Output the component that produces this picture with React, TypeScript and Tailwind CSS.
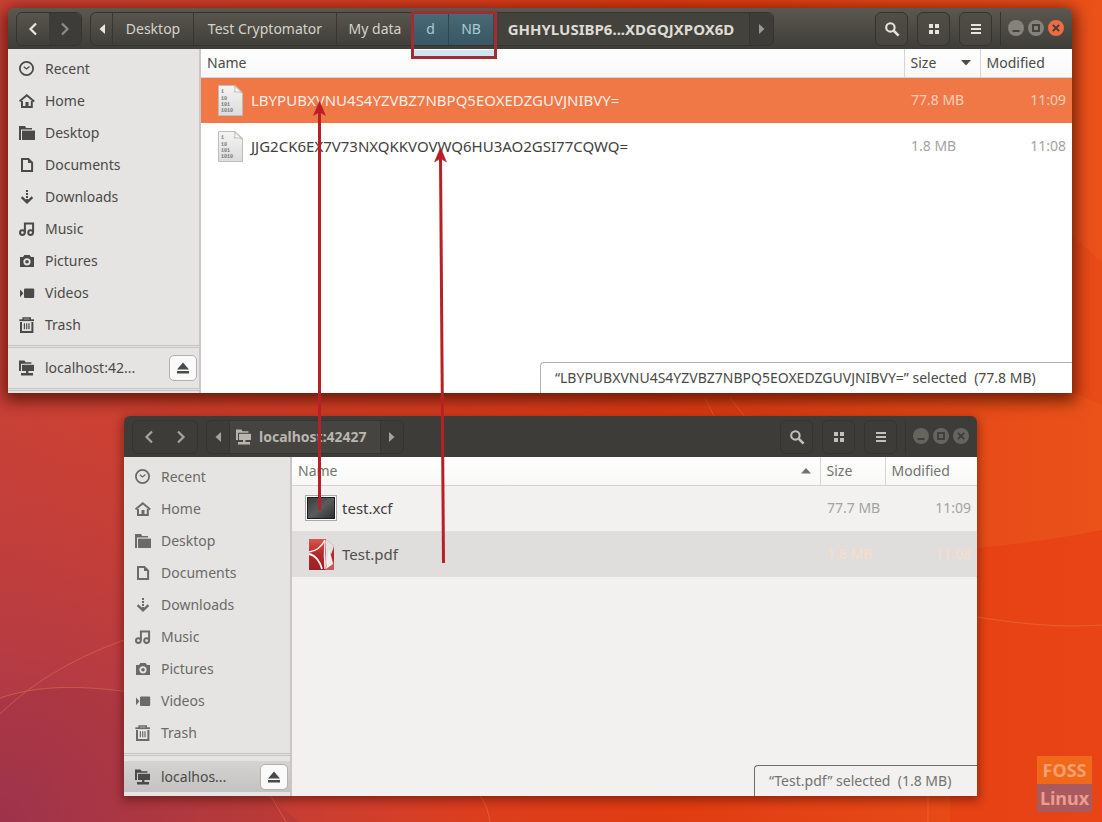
import type { ReactNode } from 'react'
import clsx from 'clsx'

type TIconName = 'recent' | 'home' | 'desktop' | 'documents' | 'downloads' | 'music' | 'pictures' | 'videos' | 'trash' | 'network'

type TPlace = {
    icon: TIconName,
    label: string
}

type TFile = {
    name: string,
    size: string,
    modified: string,
    icon: ReactNode,
    selected?: boolean
}

type TWindowProps = {
    className?: string,
    active: boolean,
    path: ReactNode,
    mount: string,
    files: TFile[],
    sortBy: 'name' | 'size',
    status: ReactNode
}

const places: TPlace[] = [
    { icon: 'recent', label: 'Recent' },
    { icon: 'home', label: 'Home' },
    { icon: 'desktop', label: 'Desktop' },
    { icon: 'documents', label: 'Documents' },
    { icon: 'downloads', label: 'Downloads' },
    { icon: 'music', label: 'Music' },
    { icon: 'pictures', label: 'Pictures' },
    { icon: 'videos', label: 'Videos' },
    { icon: 'trash', label: 'Trash' },
]

const shapes: Record<TIconName, ReactNode> = {
    recent: (
        <g fill="none" stroke="currentColor">
            <circle cx="7.5" cy="7.5" r="6.6" strokeWidth="1.8" />
            <path d="M4.8 5.8 L7.5 8 L10.5 5.4" strokeWidth="1.3" />
        </g>
    ),
    home: (
        <g>
            <path d="M0.5 8.4 L7.8 2.2 L15.2 8.4" fill="none" stroke="currentColor" strokeWidth="1.9" />
            <path d="M3 8 V14 H12.8 V8" fill="none" stroke="currentColor" strokeWidth="2" />
            <rect x="6.5" y="9" width="3" height="5" fill="currentColor" />
        </g>
    ),
    desktop: (
        <g fill="currentColor">
            <path d="M0 1 H6 L7.2 3 H13 V4.6 H2 V15 H0 Z" />
            <path d="M3 5.6 H16 V15 H3 Z" />
        </g>
    ),
    documents: (
        <g>
            <path d="M3 1.9 H9.4 L13.1 5.6 V14.1 H3 Z" fill="none" stroke="currentColor" strokeWidth="2" />
            <path d="M9 1.5 V6 H13.5 Z" fill="currentColor" />
        </g>
    ),
    downloads: (
        <g fill="none" stroke="currentColor">
            <path d="M8 1 V12" strokeWidth="2" strokeDasharray="2 1" />
            <path d="M2.6 8.2 L8 13.4 L13.4 8.2" strokeWidth="2.3" />
        </g>
    ),
    music: (
        <g fill="none" stroke="currentColor" strokeWidth="2">
            <circle cx="3.4" cy="11.6" r="2.4" />
            <circle cx="11.6" cy="11.6" r="2.4" />
            <path d="M5.9 11.6 V2.4 H14.1 V11.6" />
        </g>
    ),
    pictures: (
        <path
            fill="currentColor"
            fillRule="evenodd"
            d="M1 4 H4 L5.4 2 H10.6 L12 4 H15 V14 H1 Z M8 5.2 A3.6 3.6 0 1 0 8 12.4 A3.6 3.6 0 1 0 8 5.2 Z M8 7 A1.8 1.8 0 1 1 8 10.6 A1.8 1.8 0 1 1 8 7 Z"
        />
    ),
    videos: (
        <g fill="currentColor">
            <rect x="5" y="3.6" width="10.2" height="9.4" rx="1" />
            <path d="M1 4.4 L4.4 8.3 L1 12.2 Z" />
        </g>
    ),
    trash: (
        <g fill="none" stroke="currentColor">
            <path d="M0.4 3.2 H15" strokeWidth="1.8" />
            <path d="M4.2 3 V1 H11.2 V3" strokeWidth="1.6" />
            <path d="M2 5 V14.9 H13.4 V5" strokeWidth="2" />
            <path d="M5.4 6.2 V12.2 M7.7 6.2 V12.2 M10 6.2 V12.2" strokeWidth="1.2" />
        </g>
    ),
    network: (
        <g fill="currentColor">
            <path d="M0 0.6 H5.4 L6.6 2.2 H12.4 V3.8 H2 V11 H0 Z" />
            <path d="M3 4.8 H15 V11 H3 Z" />
            <path d="M7 11 H9.4 V13 H14 V15.4 H2 V13 H7 Z" />
        </g>
    ),
}

const Icon = ({ name, className }: { name: TIconName, className?: string }) => (
    <svg viewBox="0 0 16 16" className={clsx('size-4 shrink-0', className)} aria-hidden="true">
        {shapes[name]}
    </svg>
)

const BinaryFile = () => (
    <svg viewBox="0 0 25 31" className="w-[25px] h-[31px]" aria-hidden="true">
        <defs>
            <linearGradient id="sheet" x1="0" y1="0" x2="0" y2="1">
                <stop offset="0" stopColor="#f4f4f3" />
                <stop offset="1" stopColor="#dcdcda" />
            </linearGradient>
        </defs>
        <path d="M0.5 0.5 H17 L24.5 7.5 V30.5 H0.5 Z" fill="url(#sheet)" stroke="#bdbdb9" />
        <path d="M16.5 1 C17.5 4 17 6 16 7 C19 6.5 22 7 24 8 Z" fill="#fbfbfb" stroke="#b0b0ac" strokeWidth="0.8" />
        <g fill="#77777a" fontSize="5" fontWeight="700" fontFamily="Liberation Mono, monospace">
            <text x="3" y="8">1</text>
            <text x="3" y="15">10</text>
            <text x="3" y="21">101</text>
            <text x="3" y="27">1010</text>
        </g>
    </svg>
)

const ImageThumb = () => (
    <svg viewBox="0 0 32 26" className="w-8 h-[26px]" aria-hidden="true">
        <defs>
            <linearGradient id="thumb" x1="0" y1="0" x2="1" y2="1">
                <stop offset="0" stopColor="#3b3c3e" />
                <stop offset="0.5" stopColor="#595b5d" />
                <stop offset="1" stopColor="#2d2e30" />
            </linearGradient>
        </defs>
        <rect x="0.5" y="0.5" width="31" height="25" fill="#fff" stroke="#a9a9a9" />
        <rect x="2.5" y="2.5" width="27" height="21" fill="url(#thumb)" stroke="#1c1c1c" />
    </svg>
)

const PdfFile = () => (
    <svg viewBox="0 0 25 31" className="w-[25px] h-[31px]" aria-hidden="true">
        <defs>
            <linearGradient id="pdf" x1="0" y1="0" x2="0" y2="1">
                <stop offset="0" stopColor="#d9574f" />
                <stop offset="0.5" stopColor="#b32626" />
                <stop offset="1" stopColor="#9c2029" />
            </linearGradient>
        </defs>
        <path d="M0 0 H17 L25 7 V31 H0 Z" fill="url(#pdf)" />
        <path d="M17 0 L25 7 L21 19 L16 30 Z" fill="#e3e0df" />
        <path d="M21 13 L25 24 V31 H16 Z" fill="#c7575a" />
        <path d="M20 9 L17 30 L24 25 Z" fill="#f0eded" />
        <path d="M0 13 C7 12 13 7 16 1" fill="none" stroke="#f6eeee" strokeWidth="1.6" />
        <path d="M16 2 C15 12 15 20 16 30" fill="none" stroke="#f6eeee" strokeWidth="1.2" />
        <path d="M0 15 C6 16 11 22 13 30" fill="none" stroke="#f6eeee" strokeWidth="1.8" />
    </svg>
)

const Chevron = ({ left }: { left?: boolean }) => (
    <svg viewBox="0 0 10 14" className="w-[10px] h-[14px]" aria-hidden="true">
        <path d={left ? 'M8 1.5 L2.5 7 L8 12.5' : 'M2 1.5 L7.5 7 L2 12.5'} fill="none" stroke="currentColor" strokeWidth="2.2" />
    </svg>
)

const Triangle = ({ left }: { left?: boolean }) => (
    <svg viewBox="0 0 6 10" className="w-[6px] h-[10px]" aria-hidden="true">
        <path d={left ? 'M6 0 V10 L0.5 5 Z' : 'M0 0 V10 L5.5 5 Z'} fill="currentColor" />
    </svg>
)

const ToolButton = ({ label, active, children }: { label: string, active: boolean, children: ReactNode }) => (
    <button
        aria-label={label}
        className={clsx('flex h-[34px] w-[33px] items-center justify-center rounded-md border', active ? 'border-[#34332e] bg-[#4c4a44]/60 text-[#e6e4df]' : 'border-[#353430] text-[#c2c0ba]')}
    >
        <svg viewBox="0 0 16 16" className="size-4" aria-hidden="true">{children}</svg>
    </button>
)

const WindowControl = ({ label, tone, children }: { label: string, tone: string, children: ReactNode }) => (
    <button aria-label={label} className={clsx('flex size-4 items-center justify-center rounded-full', tone)}>
        <svg viewBox="0 0 16 16" className="size-4" fill="none" stroke="#3d3c37" strokeWidth="1.8" aria-hidden="true">{children}</svg>
    </button>
)

const HeaderBar = ({ active, path }: { active: boolean, path: ReactNode }) => {
    const line = active ? 'border-[#34332e]' : 'border-[#353430]'
    const plain = active ? 'bg-[#84827b]' : 'bg-[#66645e]'

    return (
        <header className={clsx('relative z-10 flex h-[41px] items-center rounded-t-md pl-2', active ? 'bg-linear-to-b from-[#5b5850] to-[#3e3d38]' : 'bg-[#3d3c38]')}>
            <div className={clsx('flex h-[34px] w-[66px] rounded-md border', line)}>
                <button aria-label="Back" className={clsx('flex flex-1 items-center justify-center', active ? 'text-[#e9e7e2]' : 'text-[#a5a39d]')}>
                    <Chevron left />
                </button>
                <button aria-label="Forward" className={clsx('flex flex-1 items-center justify-center rounded-r-md', active ? 'bg-[#3d3c38] text-[#8d8b85]' : 'text-[#a5a39d]')}>
                    <Chevron />
                </button>
            </div>
            <nav aria-label="Path" className={clsx('ml-2 flex h-[34px] items-stretch rounded-md border', line)}>
                {path}
            </nav>
            <div className="ml-auto flex items-center gap-[9px]">
                <ToolButton label="Search" active={active}>
                    <circle cx="6.4" cy="6.4" r="4.2" fill="none" stroke="currentColor" strokeWidth="2.1" />
                    <path d="M9.6 9.6 L14.6 14.6" stroke="currentColor" strokeWidth="2.6" />
                </ToolButton>
                <ToolButton label="Grid view" active={active}>
                    <path d="M3 3 H7 V7 H3 Z M9 3 H13 V7 H9 Z M3 9 H7 V13 H3 Z M9 9 H13 V13 H9 Z" fill="currentColor" />
                </ToolButton>
                <ToolButton label="Menu" active={active}>
                    <path d="M3 4 H13 M3 8 H13 M3 12 H13" stroke="currentColor" strokeWidth="2.2" />
                </ToolButton>
            </div>
            <div className={clsx('ml-2 flex h-[34px] items-center gap-1 border-l pb-[2px] pl-[7px] pr-2', line)}>
                <WindowControl label="Minimize" tone={plain}>
                    <path d="M4.5 11 H11.5" />
                </WindowControl>
                <WindowControl label="Maximize" tone={plain}>
                    <rect x="5" y="5" width="6" height="6" />
                </WindowControl>
                <WindowControl label="Close" tone={active ? 'bg-[#ee6c42]' : plain}>
                    <path d="M4.8 4.8 L11.2 11.2 M11.2 4.8 L4.8 11.2" />
                </WindowControl>
            </div>
        </header>
    )
}

const Sidebar = ({ active, mount }: { active: boolean, mount: string }) => (
    <aside
        className={clsx('flex shrink-0 flex-col border-r-2 border-[#c9c6c4] bg-[#e6e4e3] pt-1', active ? 'w-[193px] text-[#4a4a48]' : 'w-[168px] text-[#6a6a66]')}
    >
        <ul>
            {places.map((p) => (
                <li key={p.label}>
                    <a href="#" className="flex h-8 items-center gap-[10px] pl-[11px]">
                        <Icon name={p.icon} />
                        <span>{p.label}</span>
                    </a>
                </li>
            ))}
        </ul>
        <hr className="mt-1 h-[3px] border-y border-[#c6c4c2]" />
        <div
            className={clsx('flex items-center gap-[10px] pl-[11px] pr-[2px]', active ? 'mt-1 h-8' : 'mt-[5px] h-[31px] bg-linear-to-b from-[#d5d3d1] to-[#c5c3c0] text-[#4a4a48]')}
        >
            <Icon name="network" />
            <a href="#" className="flex-1 truncate">{mount}</a>
            <button aria-label="Eject" className="flex h-[26px] w-7 items-center justify-center rounded-[5px] border border-[#b3b0ad] bg-[#fafafa]">
                <svg viewBox="0 0 14 12" className="w-[14px] h-3" fill="currentColor" aria-hidden="true">
                    <path d="M7 0.5 L13 7.5 H1 Z M1 9 H13 V11.4 H1 Z" />
                </svg>
            </button>
        </div>
        {active && <hr className="mt-1 h-[3px] border-y border-[#c6c4c2]" />}
        <div className={active ? 'h-[2px]' : 'h-1'} />
    </aside>
)

const SortMark = ({ up }: { up?: boolean }) => (
    <svg viewBox="0 0 10 6" className="w-[10px] h-[6px]" fill="currentColor" aria-hidden="true">
        <path d={up ? 'M5 0 L10 5.5 H0 Z' : 'M0 0 H10 L5 5.5 Z'} />
    </svg>
)

const FileWindow = ({ className, active, path, mount, files, sortBy, status }: TWindowProps) => (
    <section className={clsx('rounded-t-md', className, active ? 'shadow-[0_4px_16px_4px_rgba(60,10,0,0.7)]' : 'shadow-[0_3px_10px_2px_rgba(60,10,0,0.45)]')}>
        <HeaderBar active={active} path={path} />
        <div className="flex">
            <Sidebar active={active} mount={mount} />
            <main className={clsx('relative min-w-0 flex-1', active ? 'bg-white' : 'bg-[#f2f1f0]')}>
                <table className="w-full table-fixed border-collapse text-left">
                    <thead className={clsx('bg-linear-to-b from-white to-[#f8f8f7]', active ? 'text-[#4a4a48]' : 'text-[#73736f]')}>
                        <tr className="h-7 border-b border-[#d6d4d2]">
                            <th className="p-0 font-normal">
                                <button className="flex w-full items-center justify-between pl-[6px] pr-[9px]">
                                    Name {sortBy === 'name' && <SortMark up />}
                                </button>
                            </th>
                            <th className={clsx('border-l border-[#d6d4d2] p-0 font-normal', active ? 'w-[76px]' : 'w-[65px]')}>
                                <button className="flex w-full items-center justify-between pl-[6px] pr-[9px]">
                                    Size {sortBy === 'size' && <SortMark />}
                                </button>
                            </th>
                            <th className="w-[92px] border-l border-[#d6d4d2] p-0 font-normal">
                                <button className="pl-[6px]">Modified</button>
                            </th>
                        </tr>
                    </thead>
                    <tbody>
                        {files.map((f) => {
                            const meta = f.selected ? (active ? 'text-[#fbd0bd]' : 'text-[#fbdcc9]') : 'text-[#a3a3a0]'

                            return (
                                <tr
                                    key={f.name}
                                    className={clsx('h-[46px]', f.selected && (active ? 'bg-[#f07746] text-[#fdeee7]' : 'bg-[#dfdedd] text-[#4f4f4d]'), !f.selected && 'text-[#3f3f3d]')}
                                >
                                    <td className="p-0">
                                        <div className={clsx('flex items-center text-[15px]', active ? 'gap-2 pl-[17px]' : 'gap-[5px] pl-[13px]')}>
                                            <span className={clsx('flex justify-center', !active && 'w-8')}>{f.icon}</span>
                                            <span className="whitespace-nowrap">{f.name}</span>
                                        </div>
                                    </td>
                                    <td className={clsx('whitespace-nowrap p-0 pl-[7px]', meta)}>{f.size}</td>
                                    <td className={clsx('p-0 pr-[6px] text-right', meta)}>{f.modified}</td>
                                </tr>
                            )
                        })}
                    </tbody>
                </table>
                <p
                    className={clsx('absolute bottom-0 right-0 flex h-[31px] items-center whitespace-pre rounded-tl-sm border-l border-t pl-[14px] pr-[19px]', active ? 'min-w-[532px] border-[#b5b3b1] bg-white text-[#4a4a48]' : 'min-w-[223px] border-[#6e6e6b] bg-[#f2f1f0] text-[#73736f]')}
                >
                    {status}
                </p>
            </main>
        </div>
    </section>
)

const crumb = 'flex items-center border-l border-[#37362f]'

const EncryptedPath = () => (
    <>
        <button aria-label="Earlier folders" className="flex w-[21px] items-center justify-center text-[#e9e7e2]">
            <Triangle left />
        </button>
        <button className={clsx(crumb, 'w-[81px] justify-center text-[#d5d2cb]')}>Desktop</button>
        <button className={clsx(crumb, 'w-[143px] justify-center text-[#d5d2cb]')}>Test Cryptomator</button>
        <button className={clsx(crumb, 'w-[77px] justify-center text-[#d5d2cb]')}>My data</button>
        <div className="relative flex items-stretch">
            <button className="w-[35px] bg-linear-to-b from-[#496a76] to-[#385663] text-[#a9cbd8]">d</button>
            <button className="w-[45px] border-l border-[#2e4650] bg-linear-to-b from-[#496a76] to-[#385663] text-[#a9cbd8]">NB</button>
            <span className="absolute -bottom-[14px] -left-[2px] -right-1 -top-[2px] flex flex-col justify-end border-[3px] border-[#a02c35]">
                <span className="h-[6px] bg-[#cfe4f1]" />
            </span>
        </div>
        <button className="flex w-[256px] items-center justify-center bg-[#44423d] text-[15px] font-bold text-[#dedbd4]">GHHYLUSIBP6...XDGQJXPOX6D</button>
        <button aria-label="Later folders" className={clsx(crumb, 'w-6 justify-center rounded-r-md bg-[#3d3c38] text-[#9b9993]')}>
            <Triangle />
        </button>
    </>
)

const MountPath = () => (
    <>
        <button aria-label="Earlier folders" className="flex w-[22px] items-center justify-center text-[#a5a39d]">
            <Triangle left />
        </button>
        <button className={clsx(crumb, 'w-[151px] gap-[7px] bg-[#454440] pl-[6px] font-bold text-[#b9b6af]')}>
            <Icon name="network" />
            localhost:42427
        </button>
        <button aria-label="Later folders" className={clsx(crumb, 'w-[23px] justify-center text-[#a5a39d]')}>
            <Triangle />
        </button>
    </>
)

const encryptedFiles: TFile[] = [
    { name: 'LBYPUBXVNU4S4YZVBZ7NBPQ5EOXEDZGUVJNIBVY=', size: '77.8 MB', modified: '11:09', icon: <BinaryFile />, selected: true },
    { name: 'JJG2CK6EX7V73NXQKKVOVWQ6HU3AO2GSI77CQWQ=', size: '1.8 MB', modified: '11:08', icon: <BinaryFile /> },
]

const plainFiles: TFile[] = [
    { name: 'test.xcf', size: '77.7 MB', modified: '11:09', icon: <ImageThumb /> },
    { name: 'Test.pdf', size: '1.8 MB', modified: '11:08', icon: <PdfFile />, selected: true },
]

const Wallpaper = () => (
    <svg viewBox="0 0 1102 822" preserveAspectRatio="none" className="absolute inset-0 size-full" aria-hidden="true">
        <defs>
            <linearGradient id="base" x1="0" y1="0" x2="1" y2="0">
                <stop offset="0" stopColor="#cb4236" />
                <stop offset="0.35" stopColor="#d93f22" />
                <stop offset="0.6" stopColor="#e03c12" />
                <stop offset="1" stopColor="#ea521a" />
            </linearGradient>
            <radialGradient id="plum" gradientUnits="userSpaceOnUse" cx="0" cy="822" r="480">
                <stop offset="0" stopColor="#a23450" />
                <stop offset="0.35" stopColor="#b23a45" stopOpacity="0.85" />
                <stop offset="1" stopColor="#c23e3a" stopOpacity="0" />
            </radialGradient>
        </defs>
        <rect width="1102" height="822" fill="url(#base)" />
        <rect width="1102" height="822" fill="url(#plum)" />
        <path d="M0 700 C40 684 85 686 130 692 L300 822 H0 Z" fill="#8d2a3c" opacity="0.18" />
        <path d="M950 550 C1010 546 1060 538 1102 530 V822 H950 Z" fill="#e63c12" opacity="0.6" />
        <path d="M1072 235 L1102 262 V405 C1080 395 1070 390 1040 388 Z" fill="#e43a10" opacity="0.3" />
        <g fill="none" stroke="#f08a58" strokeWidth="1" opacity="0.4">
            <path d="M0 714 C35 680 80 655 130 638" />
            <path d="M0 698 C40 684 85 686 130 692" />
            <path d="M970 616 C1020 624 1060 628 1102 625" />
            <path d="M705 398 L715 418 M730 398 L746 418" />
            <path d="M271 796 L286 822 M480 796 C486 804 489 814 490 822 M928 796 V822" />
        </g>
    </svg>
)

const Arrows = () => (
    <svg width="1102" height="822" className="pointer-events-none absolute left-0 top-0 z-20" stroke="#b92026" fill="#b92026" aria-hidden="true">
        <path d="M319.5 510 V112" strokeWidth="3" />
        <path d="M319.5 101 L325.5 115.5 L319.5 112 L313.5 115.5 Z" strokeWidth="0.5" />
        <path d="M443.5 563 L440.5 158" strokeWidth="3" />
        <path d="M440.5 147.5 L446.5 162 L440.5 158.5 L434.5 162 Z" strokeWidth="0.5" />
    </svg>
)

const App = () => (
    <div className="relative min-h-screen overflow-hidden font-['Noto_Sans','Open_Sans',sans-serif] text-[14px] leading-5">
        <Wallpaper />
        <div className="relative flex flex-col pb-[26px] pl-2 pr-[30px] pt-2">
            <FileWindow
                active
                path={<EncryptedPath />}
                mount="localhost:42..."
                files={encryptedFiles}
                sortBy="size"
                status="“LBYPUBXVNU4S4YZVBZ7NBPQ5EOXEDZGUVJNIBVY=” selected  (77.8 MB)"
            />
            <FileWindow
                className="ml-[116px] mr-[95px] mt-[23px]"
                active={false}
                path={<MountPath />}
                mount="localhos..."
                files={plainFiles}
                sortBy="name"
                status="“Test.pdf” selected  (1.8 MB)"
            />
        </div>
        <div className="absolute bottom-[10px] right-[10px] w-[55px] text-center text-[18px] font-bold leading-7 text-[#f5a070]">
            <div className="bg-[#f0691a]">FOSS</div>
            <div className="bg-[#a85a5e] text-[#ef9c8e]">Linux</div>
        </div>
        <Arrows />
    </div>
)

export default App
